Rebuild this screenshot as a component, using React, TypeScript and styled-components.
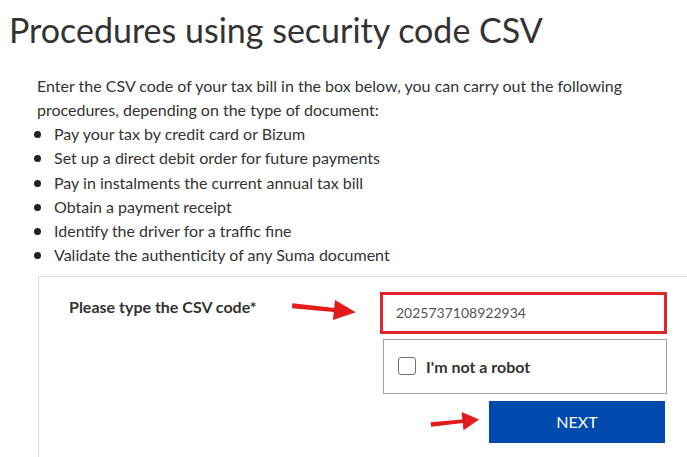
import { useState } from "react";
import styled, { createGlobalStyle } from "styled-components";

const GlobalStyle = createGlobalStyle`
  html, body {
    margin: 0;
    padding: 0;
    background: #fff;
    overflow: hidden;
  }
  body {
    font-family: Lato, "Open Sans", sans-serif;
    color: #333;
  }
`;

const items = [
  "Pay your tax by credit card or Bizum",
  "Set up a direct debit order for future payments",
  "Pay in instalments the current annual tax bill",
  "Obtain a payment receipt",
  "Identify the driver for a traffic fine",
  "Validate the authenticity of any Suma document"
];

const Arrow = ({ className, angle }: { className?: string; angle: number }) => (
  <svg
    className={className}
    width="66"
    height="24"
    viewBox="0 0 66 24"
    preserveAspectRatio="none"
    style={{ transform: `rotate(${angle}deg)` }}
  >
    <path d="M1 9.5 L46 10 L46 14 L1 14.5 Z" fill="#e31b1b" />
    <path d="M43 2 L65 12 L43 22 Z" fill="#e31b1b" />
  </svg>
);

const App = () => {
  const [checked, setChecked] = useState(false);
  const [code, setCode] = useState("2025737108922934");

  return (
    <Page>
      <GlobalStyle />
      <Title>Procedures using security code CSV</Title>
      <Intro>
        Enter the CSV code of your tax bill in the box below, you can carry out
        the following procedures, depending on the type of document:
      </Intro>
      <List>
        {items.map((item) => (
          <li key={item}>{item}</li>
        ))}
      </List>
      <FormBox>
        <Label htmlFor="csv">Please type the CSV code*</Label>
        <FormColumn>
          <CodeInput
            id="csv"
            value={code}
            onChange={(e) => setCode(e.target.value)}
          />
          <Captcha>
            <Check
              type="checkbox"
              checked={checked}
              onChange={() => setChecked((prev) => !prev)}
            />
            <span>I'm not a robot</span>
          </Captcha>
          <NextButton>NEXT</NextButton>
        </FormColumn>
        <LabelArrow angle={6} />
        <ButtonArrow angle={-6} />
      </FormBox>
    </Page>
  );
};

const Page = styled.div`
  width: 687px;
  height: 457px;
  overflow: hidden;
`;

const Title = styled.h1`
  margin: 0;
  padding: 9px 0 0 9px;
  font-family: Lato, sans-serif;
  font-weight: 400;
  font-size: 34px;
  line-height: 42px;
  color: #333;
`;

const Intro = styled.p`
  margin: 23px 40px 0 37px;
  font-size: 16px;
  line-height: 24px;
`;

const List = styled.ul`
  margin: 0 0 0 37px;
  padding: 0 0 0 17px;
  list-style: none;
  font-size: 16px;
  line-height: 24.3px;
  li {
    position: relative;
  }
  li::before {
    content: "";
    position: absolute;
    left: -20px;
    top: 9px;
    width: 7px;
    height: 7px;
    border-radius: 50%;
    background: #222;
  }
`;

const FormBox = styled.div`
  position: relative;
  margin: 8px 0 0 38px;
  border-top: 1px solid #dcdde3;
  border-left: 1px solid #dcdde3;
  display: grid;
  grid-template-columns: 341px 287px;
  padding: 15px 0 30px 0;
`;

const Label = styled.label`
  padding: 5px 0 0 30px;
  font-weight: 700;
  font-size: 16px;
  color: #333;
`;

const FormColumn = styled.div`
  display: flex;
  flex-direction: column;
  align-items: flex-end;
`;

const CodeInput = styled.input`
  box-sizing: border-box;
  width: 287px;
  height: 42px;
  border: 3px solid #e1262b;
  padding: 0 13px;
  font-family: Lato, sans-serif;
  font-size: 14px;
  color: #555;
  outline: none;
`;

const Captcha = styled.label`
  box-sizing: border-box;
  width: 284px;
  height: 55px;
  margin-top: 5px;
  border: 1px solid #a3a3a3;
  display: flex;
  align-items: center;
  gap: 10px;
  padding-left: 14px;
  font-weight: 700;
  font-size: 16px;
  color: #333;
`;

const Check = styled.input`
  appearance: none;
  margin: 0;
  width: 18px;
  height: 18px;
  border: 1.5px solid #707070;
  border-radius: 3px;
  background: #fff;
  &:checked {
    background: #0049ad;
  }
`;

const NextButton = styled.button`
  margin-top: 7px;
  margin-right: 2px;
  width: 176px;
  height: 42px;
  border: 0;
  background: #0049ad;
  color: #fff;
  font-family: Lato, sans-serif;
  font-size: 16px;
  cursor: pointer;
`;

const LabelArrow = styled(Arrow)`
  position: absolute;
  left: 252px;
  top: 20px;
`;

const ButtonArrow = styled(Arrow)`
  position: absolute;
  left: 391px;
  top: 134px;
  width: 50px;
  height: 22px;
`;

export default App;
